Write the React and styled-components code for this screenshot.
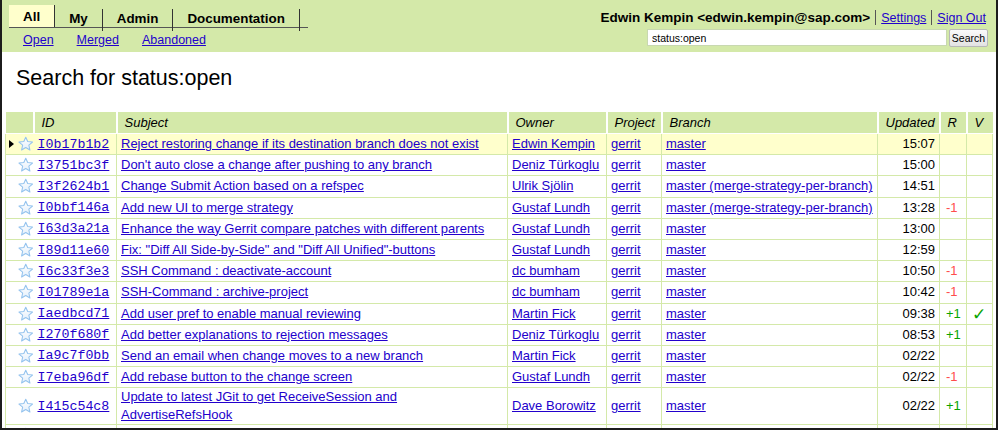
import React from "react";
import styled, { createGlobalStyle } from "styled-components";

const GlobalStyle = createGlobalStyle`
  html, body {
    margin: 0;
    padding: 0;
    background: #ffffff;
  }
  body {
    font-family: "Liberation Sans", Arial, sans-serif;
    font-size: 13px;
    color: #000;
  }
`;

const Frame = styled.div`
  box-sizing: border-box;
  width: 998px;
  height: 430px;
  border: 2px solid #1c1c1c;
  border-top: none;
  overflow: hidden;
  background: #fff;
`;

const TopBar = styled.div`
  display: flex;
  justify-content: space-between;
  background: #d4e9a9;
  height: 52px;
  padding: 5px 8px 0 7px;
  box-sizing: border-box;
`;

const LeftMenu = styled.div`
  display: flex;
  flex-direction: column;
`;

const Tabs = styled.div`
  display: flex;
  border-bottom: 1px solid #555;
  width: 299px;
  height: 23px;
  box-sizing: border-box;
`;

const Tab = styled.div`
  display: flex;
  align-items: center;
  padding: 0 14px;
  font-weight: bold;
  font-size: 13.4px;
  background: ${({ active }) => (active ? "#ffffcc" : "transparent")};
  border-right: 1px solid #333;
  margin: ${({ active }) => (active ? "0" : "4px 0 0")};
  height: ${({ active }) => (active ? "22px" : "18px")};
  padding-bottom: ${({ active }) => (active ? "0" : "4px")};
`;

const SubMenu = styled.div`
  display: flex;
  gap: 23px;
  padding: 5px 0 0 14px;
  font-size: 12.5px;
`;

const Link = styled.a`
  color: #2200cc;
  text-decoration: underline;
  cursor: pointer;
`;

const RightMenu = styled.div`
  display: flex;
  flex-direction: column;
  align-items: flex-end;
`;

const UserLine = styled.div`
  display: flex;
  align-items: center;
  gap: 5px;
  font-size: 12.5px;
  height: 21px;
  margin: 2px 2px 0 0;
`;

const UserName = styled.span`
  font-weight: bold;
  font-size: 13.5px;
`;

const Pipe = styled.span`
  width: 1px;
  height: 15px;
  background: #555;
`;

const SearchRow = styled.div`
  display: flex;
  gap: 2px;
  margin-top: 1px;
`;

const SearchInput = styled.input`
  width: 300px;
  height: 17px;
  box-sizing: border-box;
  border: 1px solid #c8d8b0;
  font-family: "Liberation Sans", Arial, sans-serif;
  font-size: 10.5px;
  padding: 0 4px;
  background: #fff;
  outline: none;
`;

const SearchButton = styled.button`
  width: 39px;
  height: 18px;
  box-sizing: border-box;
  border: 1px solid #b8b8b8;
  border-radius: 2px;
  background: linear-gradient(#fafafa, #e2e2e2);
  font-family: "Liberation Sans", Arial, sans-serif;
  font-size: 10.5px;
  padding: 0;
  color: #000;
`;

const Title = styled.h1`
  margin: 0;
  padding: 14px 0 0 14px;
  height: 60px;
  box-sizing: border-box;
  font-weight: normal;
  font-size: 21.5px;
`;

const Table = styled.table`
  border-collapse: collapse;
  margin-left: 3px;
  width: 987px;
  table-layout: fixed;
`;

const HeadCell = styled.th`
  background: #d4e9a9;
  font-weight: normal;
  font-style: italic;
  text-align: ${({ right }) => (right ? "right" : "left")};
  padding: 0 5px 0 7px;
  height: 21px;
  border-left: 2px solid #fff;
  border-bottom: 1px solid #fff;
  &:first-child {
    border-left: none;
  }
`;

const Row = styled.tr`
  background: ${({ current }) => (current ? "#ffffcc" : "#fff")};
`;

const Cell = styled.td`
  height: 20.2px;
  padding: 0 4px;
  border: 1px solid #d4e9a9;
  border-right: ${({ noRight }) => (noRight ? "none" : "1px solid #d4e9a9")};
  border-left: ${({ noLeft }) => (noLeft ? "none" : "1px solid #d4e9a9")};
  text-align: ${({ right }) => (right ? "right" : "left")};
  white-space: ${({ wrap }) => (wrap ? "normal" : "nowrap")};
  line-height: 18px;
  vertical-align: middle;
`;

const IconCell = styled(Cell)`
  padding: 0 0 0 3px;
`;

const ScoreCell = styled(Cell)`
  padding: 0 0 0 6px;
`;

const IconBox = styled.div`
  display: flex;
  align-items: center;
  gap: 4px;
`;

const Pointer = styled.span`
  width: 0;
  height: 0;
  border-top: 4px solid transparent;
  border-bottom: 4px solid transparent;
  border-left: 5px solid ${({ show }) => (show ? "#000" : "transparent")};
`;

const IdLink = styled(Link)`
  font-family: "Liberation Mono", "Courier New", monospace;
  font-size: 13.3px;
`;

const Score = styled.span`
  color: ${({ positive }) => (positive ? "#08a400" : "#ff4d4d")};
`;

const Check = styled.span`
  color: #08a400;
  font-size: 17px;
  font-family: "DejaVu Sans", sans-serif;
  display: block;
  padding-left: 1px;
`;

const Star = () => (
  <svg width="16" height="16" viewBox="0 0 16 16">
    <defs>
      <linearGradient id="sg" x1="0" y1="0" x2="0" y2="1">
        <stop offset="0" stopColor="#ffffff" />
        <stop offset="1" stopColor="#e3effb" />
      </linearGradient>
    </defs>
    <path
      d="M8 1 L10 5.5 L15 6 L11.2 9.2 L12.3 14.2 L8 11.6 L3.7 14.2 L4.8 9.2 L1 6 L6 5.5 Z"
      fill="url(#sg)"
      stroke="#94c3ee"
      strokeWidth="1.1"
      strokeLinejoin="round"
    />
  </svg>
);

const changes = [
  ["I0b17b1b2", "Reject restoring change if its destination branch does not exist", "Edwin Kempin", "master", "15:07", "", ""],
  ["I3751bc3f", "Don't auto close a change after pushing to any branch", "Deniz Türkoglu", "master", "15:00", "", ""],
  ["I3f2624b1", "Change Submit Action based on a refspec", "Ulrik Sjölin", "master (merge-strategy-per-branch)", "14:51", "", ""],
  ["I0bbf146a", "Add new UI to merge strategy", "Gustaf Lundh", "master (merge-strategy-per-branch)", "13:28", "-1", ""],
  ["I63d3a21a", "Enhance the way Gerrit compare patches with different parents", "Gustaf Lundh", "master", "13:00", "", ""],
  ["I89d11e60", "Fix: \"Diff All Side-by-Side\" and \"Diff All Unified\"-buttons", "Gustaf Lundh", "master", "12:59", "", ""],
  ["I6c33f3e3", "SSH Command : deactivate-account", "dc bumham", "master", "10:50", "-1", ""],
  ["I01789e1a", "SSH-Command : archive-project", "dc bumham", "master", "10:42", "-1", ""],
  ["Iaedbcd71", "Add user pref to enable manual reviewing", "Martin Fick", "master", "09:38", "+1", "ok"],
  ["I270f680f", "Add better explanations to rejection messages", "Deniz Türkoglu", "master", "08:53", "+1", ""],
  ["Ia9c7f0bb", "Send an email when change moves to a new branch", "Martin Fick", "master", "02/22", "", ""],
  ["I7eba96df", "Add rebase button to the change screen", "Gustaf Lundh", "master", "02/22", "-1", ""],
  ["I415c54c8", "Update to latest JGit to get ReceiveSession and AdvertiseRefsHook", "Dave Borowitz", "master", "02/22", "+1", ""],
  ["", "", "", "", "", "", ""],
];

export default function App() {
  return (
    <>
      <GlobalStyle />
      <Frame>
        <TopBar>
          <LeftMenu>
            <Tabs>
              <Tab active>All</Tab>
              <Tab>My</Tab>
              <Tab>Admin</Tab>
              <Tab>Documentation</Tab>
            </Tabs>
            <SubMenu>
              <Link>Open</Link>
              <Link>Merged</Link>
              <Link>Abandoned</Link>
            </SubMenu>
          </LeftMenu>
          <RightMenu>
            <UserLine>
              <UserName>Edwin Kempin &lt;edwin.kempin@sap.com&gt;</UserName>
              <Pipe />
              <Link>Settings</Link>
              <Pipe />
              <Link>Sign Out</Link>
            </UserLine>
            <SearchRow>
              <SearchInput defaultValue="status:open" />
              <SearchButton>Search</SearchButton>
            </SearchRow>
          </RightMenu>
        </TopBar>
        <Title>Search for status:open</Title>
        <Table>
          <colgroup>
            <col style={{ width: 28 }} />
            <col style={{ width: 83 }} />
            <col style={{ width: 391 }} />
            <col style={{ width: 99 }} />
            <col style={{ width: 55 }} />
            <col style={{ width: 216 }} />
            <col style={{ width: 62 }} />
            <col style={{ width: 27 }} />
            <col style={{ width: 26 }} />
          </colgroup>
          <thead>
            <tr>
              <HeadCell />
              <HeadCell>ID</HeadCell>
              <HeadCell>Subject</HeadCell>
              <HeadCell>Owner</HeadCell>
              <HeadCell>Project</HeadCell>
              <HeadCell>Branch</HeadCell>
              <HeadCell right>Updated</HeadCell>
              <HeadCell>R</HeadCell>
              <HeadCell>V</HeadCell>
            </tr>
          </thead>
          <tbody>
            {changes.map(([id, subject, owner, branch, updated, r, v], i) => (
              <Row key={i} current={i === 0}>
                <IconCell noRight>
                  <IconBox>
                    <Pointer show={i === 0} />
                    <Star />
                  </IconBox>
                </IconCell>
                <Cell noLeft>{id && <IdLink>{id}</IdLink>}</Cell>
                <Cell wrap>{subject && <Link>{subject}</Link>}</Cell>
                <Cell>{owner && <Link>{owner}</Link>}</Cell>
                <Cell>{id && <Link>gerrit</Link>}</Cell>
                <Cell>{branch && <Link>{branch}</Link>}</Cell>
                <Cell right>{updated}</Cell>
                <ScoreCell>{r && <Score positive={r === "+1"}>{r}</Score>}</ScoreCell>
                <Cell>{v && <Check>✓</Check>}</Cell>
              </Row>
            ))}
          </tbody>
        </Table>
      </Frame>
    </>
  );
}
